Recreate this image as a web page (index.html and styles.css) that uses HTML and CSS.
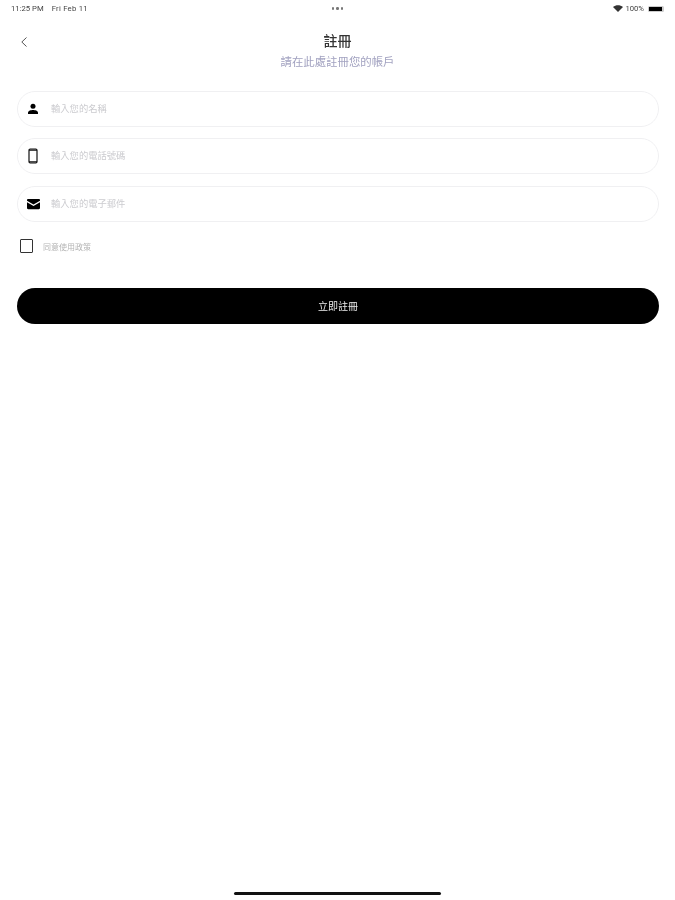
FILE: index.html
```html
<!DOCTYPE html>
<html lang="zh-Hant">
  <head>
    <title>註冊</title>
    <meta charset="utf-8">
    <link rel="stylesheet" href="styles.css">
  </head>
  <body>
    <div class="screen">
      <div class="status-bar">
        <div class="status-left">
          <span>11:25 PM</span>
          <span class="status-date">Fri Feb 11</span>
        </div>
        <div class="status-dots"><i></i><i></i><i></i></div>
        <div class="status-right">
          <svg width="10" height="7" viewBox="0 0 10 7"><path d="M0 2 C2.8 -0.4 7.2 -0.4 10 2 L5 7 Z" fill="#333"/></svg>
          <span>100%</span>
          <span class="battery"><b></b></span>
        </div>
      </div>

      <header class="header">
        <a class="back">
          <svg width="8" height="12" viewBox="0 0 8 12"><path d="M6.5 1.5 L1.8 6 L6.5 10.5" fill="none" stroke="#555" stroke-width="1"/></svg>
        </a>
        <h1>註冊</h1>
        <p>請在此處註冊您的帳戶</p>
      </header>

      <form class="form">
        <div class="field">
          <svg class="field-icon" width="12" height="12" viewBox="0 0 12 12"><circle cx="6" cy="3.3" r="2.5" fill="#000"/><path d="M1 11 V9.6 C1 7.8 4 7 6 7 S11 7.8 11 9.6 V11 Z" fill="#000"/></svg>
          <span class="placeholder">輸入您的名稱</span>
        </div>
        <div class="field">
          <svg class="field-icon" width="12" height="16" viewBox="0 0 12 16"><rect x="2" y="1" width="8" height="14" rx="1.2" fill="none" stroke="#111" stroke-width="1.2"/><path d="M2 2.2 H10 M2 13.8 H10" stroke="#111" stroke-width="1.2"/></svg>
          <span class="placeholder">輸入您的電話號碼</span>
        </div>
        <div class="field">
          <svg class="field-icon" width="13" height="12" viewBox="0 0 13 12"><path d="M1.2 1 H11.8 C12.5 1 13 1.5 13 2.2 V2.8 L6.5 6.4 L0 2.8 V2.2 C0 1.5 0.5 1 1.2 1 Z" fill="#000"/><path d="M0 4.3 L6.5 7.9 L13 4.3 V10 C13 10.7 12.5 11.2 11.8 11.2 H1.2 C0.5 11.2 0 10.7 0 10 Z" fill="#000"/></svg>
          <span class="placeholder">輸入您的電子郵件</span>
        </div>
        <label class="terms">
          <span class="checkbox"></span>
          <span>同意使用政策</span>
        </label>
        <button class="submit" type="button">立即註冊</button>
      </form>

      <div class="home-bar"></div>
    </div>
  </body>
</html>
```

FILE: styles.css
```css
* {
  box-sizing: border-box;
}

body {
  margin: 0;
  background: #fff;
  font-family: "Noto Sans CJK TC", "Noto Sans", sans-serif;
}

.screen {
  width: 675px;
  height: 900px;
  display: flex;
  flex-direction: column;
  filter: blur(0.5px);
}

.status-bar {
  height: 16px;
  padding: 1px 11px 0;
  display: flex;
  align-items: center;
  justify-content: space-between;
  font-family: Roboto, sans-serif;
  font-size: 7.7px;
  color: #444;
}

.status-left {
  display: flex;
  gap: 8px;
  width: 120px;
}

.status-date {
  letter-spacing: 0.25px;
}

.status-dots {
  display: flex;
  gap: 2px;
}

.status-dots i {
  width: 2.5px;
  height: 2.5px;
  border-radius: 50%;
  background: #777;
}

.status-right {
  width: 120px;
  display: flex;
  justify-content: flex-end;
  align-items: center;
  gap: 2px;
}

.battery {
  width: 16px;
  height: 6px;
  margin-left: 2px;
  padding: 1px 2px 1px 1px;
  border-radius: 1.5px;
  background: #ccc;
  display: block;
}

.battery b {
  display: block;
  height: 100%;
  background: #000;
}

.header {
  position: relative;
  text-align: center;
  padding-top: 14px;
}

.header h1 {
  margin: 0;
  font-size: 14px;
  line-height: 20px;
  font-weight: 500;
  color: #333;
}

.header p {
  margin: 3px 0 0;
  font-size: 11.4px;
  line-height: 16px;
  color: #a2a2c0;
}

.back {
  position: absolute;
  left: 20px;
  top: 20px;
  line-height: 0;
}

.form {
  padding: 21.5px 16px 0 17px;
  display: flex;
  flex-direction: column;
}

.field {
  height: 36px;
  margin-bottom: 11.5px;
  border: 1px solid #f0f0f2;
  border-radius: 18px;
  display: flex;
  align-items: center;
  position: relative;
  padding-left: 33px;
  padding-bottom: 2px;
}

.field-icon {
  position: absolute;
  left: 9px;
  top: 50%;
  transform: translateY(-50%);
}

.placeholder {
  font-size: 9.3px;
  color: #cbcbcf;
}

.terms {
  display: flex;
  align-items: center;
  gap: 10px;
  padding-left: 3px;
  margin-top: 6px;
  font-size: 8px;
  color: #b4b4b4;
}

.checkbox {
  width: 13px;
  height: 14px;
  border: 1.3px solid #333;
  border-radius: 1px;
}

.submit {
  height: 36px;
  margin-top: 34.5px;
  border: 0;
  border-radius: 18px;
  background: #000;
  color: #eee;
  font-family: inherit;
  font-size: 10px;
  padding: 0;
}

.home-bar {
  width: 207px;
  height: 3px;
  margin: auto auto 5px;
  border-radius: 2px;
  background: #111;
}
```
